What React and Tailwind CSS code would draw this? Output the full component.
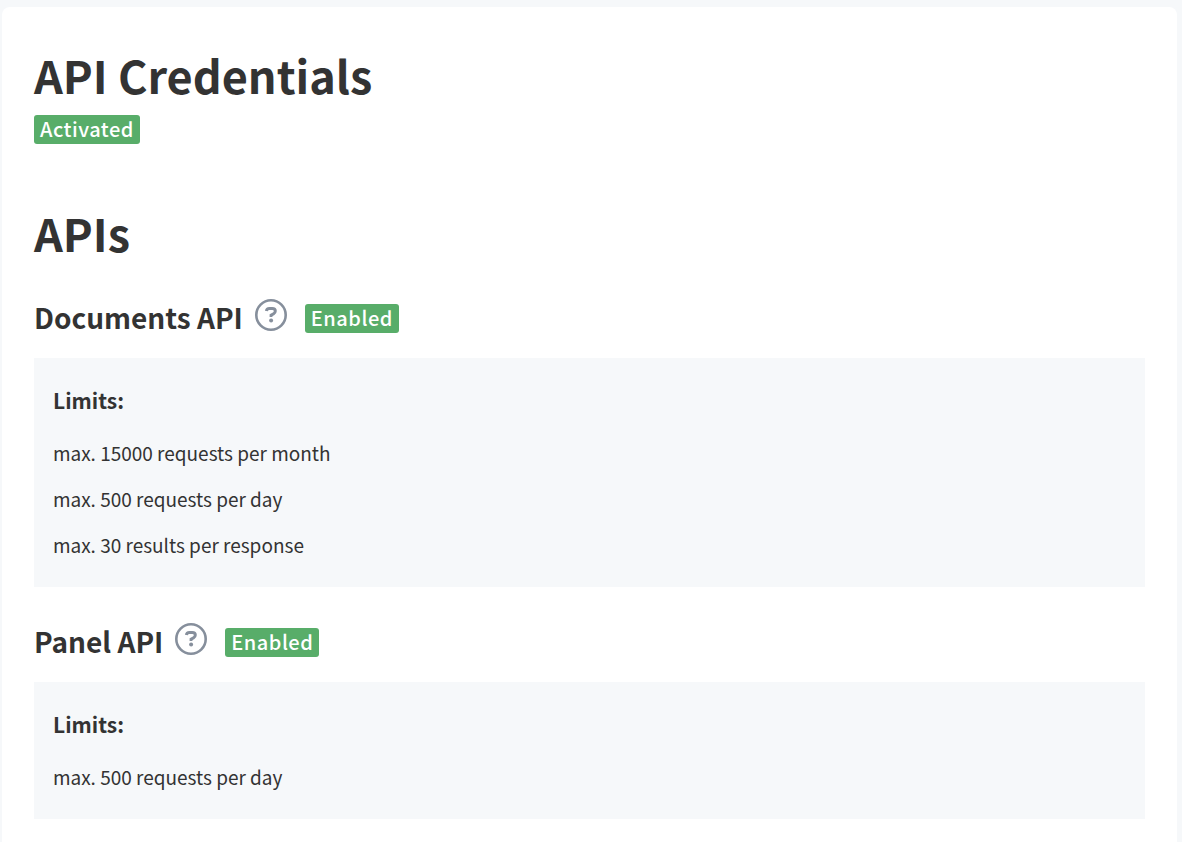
import React from "react";

const apis = [
  {
    name: "Documents API",
    status: "Enabled",
    limits: [
      "max. 15000 requests per month",
      "max. 500 requests per day",
      "max. 30 results per response",
    ],
  },
  {
    name: "Panel API",
    status: "Enabled",
    limits: ["max. 500 requests per day"],
  },
];

function Badge({ children }) {
  return (
    <span className="rounded-[3px] bg-[#58ad69] px-1.5 pb-0.5 text-xl leading-[27px] font-medium tracking-wide text-white">
      {children}
    </span>
  );
}

function HelpIcon() {
  return (
    <svg viewBox="0 0 32 32" className="block size-8" fill="none" stroke="#868f9c" aria-hidden="true">
      <circle cx="16" cy="16" r="14.7" strokeWidth="2.6" />
      <path
        d="M11.4 12C11.6 10.2 12.8 9.4 14.4 9.4H17.2C19.1 9.4 20.3 10.5 20.3 12.1C20.3 13.3 19.7 14.1 18.7 14.7L16.1 16.2V18"
        strokeWidth="3"
      />
      <circle cx="16.1" cy="21.6" r="2" fill="#868f9c" stroke="none" />
    </svg>
  );
}

function ApiSection({ api }) {
  return (
    <section className="mb-[35px]">
      <div className="flex h-10 items-center">
        <h3 className="mb-0.5 text-[28px] leading-[38px] font-bold">{api.name}</h3>
        <button type="button" aria-label={`About ${api.name}`} className="mr-[18px] mb-1.5 ml-3">
          <HelpIcon />
        </button>
        <Badge>{api.status}</Badge>
      </div>
      <div className="mt-5 bg-[#f6f8fa] px-[19px] pt-[26px] pb-[19px]">
        <h4 className="text-[21px] leading-8 font-bold">Limits:</h4>
        <ul className="mt-3.5 text-[19px] leading-[46px]">
          {api.limits.map((limit) => (
            <li key={limit}>{limit}</li>
          ))}
        </ul>
      </div>
    </section>
  );
}

export default function App() {
  return (
    <div className="flex min-h-screen flex-col bg-[#f6f8fa] pt-[7px] pr-[5px] pl-[2px] font-['Noto_Sans_CJK_SC',sans-serif] text-[#333333]">
      <main className="flex-1 rounded-t-lg bg-white px-8 pt-9">
        <h1 className="text-[45px] leading-[64px] font-bold">API Credentials</h1>
        <div className="mt-2 flex">
          <Badge>Activated</Badge>
        </div>
        <h2 className="mt-[57px] mb-[33px] text-[45px] leading-[64px] font-bold">APIs</h2>
        {apis.map((api) => (
          <ApiSection key={api.name} api={api} />
        ))}
      </main>
    </div>
  );
}
